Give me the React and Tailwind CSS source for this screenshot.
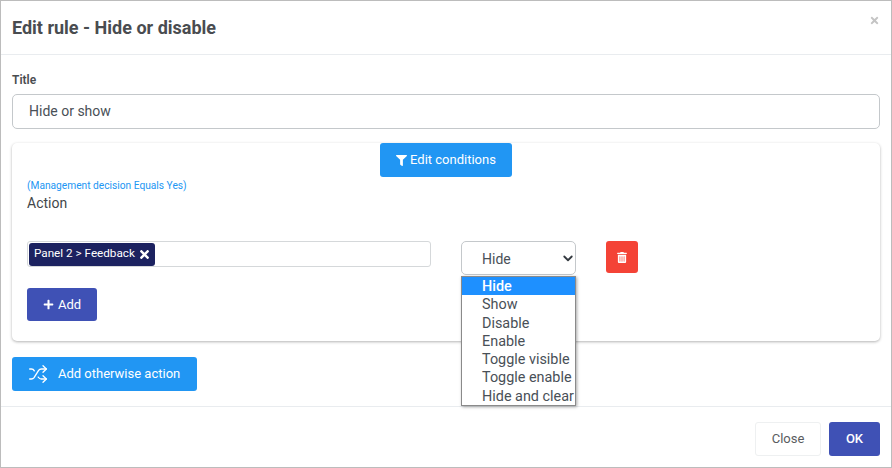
import { FaFilter, FaPlus, FaTimes, FaTrashAlt } from 'react-icons/fa'
import { LuShuffle } from 'react-icons/lu'

const OPTIONS = ['Hide', 'Show', 'Disable', 'Enable', 'Toggle visible', 'Toggle enable', 'Hide and clear']

function ActionRow() {
  return (
    <div className="mt-[29px] flex items-start">
      <div className="flex h-[26px] w-[404px] items-center rounded-[3px] border border-[#d5d8da] pl-[1px]">
        <span className="flex h-[23px] items-center gap-[3px] rounded-[3px] bg-[#1c2260] pl-[5px] pr-[4px] text-[11.7px] text-white">
          Panel 2 &gt; Feedback
          <FaTimes className="h-[13px] w-[13px]" />
        </span>
      </div>

      <div className="relative ml-[30px] w-[115px]">
        <div className="flex h-[34px] items-center justify-between rounded-[5px] border border-[#c4c8cb] pl-[20px] pr-[1px] text-[14px] text-[#495057]">
          <span className="mt-[2px]">Hide</span>
          <svg viewBox="0 0 16 16" className="h-[12px] w-[12px] text-[#343a40]" fill="none" stroke="currentColor" strokeWidth="2.4" strokeLinecap="round" strokeLinejoin="round">
            <path d="M3 6l5 5 5-5" />
          </svg>
        </div>
        <ul className="absolute left-0 top-[35px] z-10 h-[130px] w-[115px] border border-[#8a8a8a] bg-white text-[14.4px] leading-[18.3px] text-[#495057] shadow-[1px_1px_3px_rgba(0,0,0,0.35)]">
          {OPTIONS.map((o, i) => (
            <li key={o} className={i === 0 ? 'h-[18.3px] bg-[#1e90ff] pl-[20px] pt-[1px] font-medium text-white' : 'h-[18.3px] whitespace-nowrap pl-[20px] pt-[1px]'}>
              {o}
            </li>
          ))}
        </ul>
      </div>

      <button className="ml-[30px] flex h-[32px] w-[32px] items-center justify-center rounded-[3px] bg-[#f44336] text-white">
        <FaTrashAlt className="h-[11px] w-[10px]" />
      </button>
    </div>
  )
}

export default function App() {
  return (
    <div className="flex h-[468px] w-[892px] flex-col border border-[#bcbcbc] bg-white font-['Roboto',sans-serif] text-[#424549]">
      <header className="flex h-[54px] shrink-0 items-center justify-between border-b border-[#e9ecef] pl-[11px] pr-[11px]">
        <h1 className="text-[18px] font-bold text-[#494c50]">Edit rule - Hide or disable</h1>
        <FaTimes className="mb-[14px] h-[11px] w-[11px] text-[#c4c4c4]" />
      </header>

      <main className="h-[351px] shrink-0 px-[11px] pt-[17px]">
        <label className="block text-[12px] font-semibold leading-[16px] text-[#494c50]">Title</label>
        <div className="mt-[6px] flex h-[35px] items-center rounded-[5px] border border-[#c4c8cb] pl-[16px] text-[14px] text-[#495057]">
          Hide or show
        </div>

        <section className="mt-[14px] h-[198px] rounded-[5px] bg-white px-[15px] shadow-[0_1px_3px_rgba(0,0,0,0.3)]">
          <div className="flex justify-center">
            <button className="flex h-[34px] w-[132px] items-center justify-center gap-[3px] rounded-[3px] bg-[#2196f3] text-[13px] text-white">
              <FaFilter className="h-[11px] w-[11px]" />
              Edit conditions
            </button>
          </div>
          <p className="mt-[2px] text-[10.2px] leading-[14px] text-[#2196f3]">(Management decision Equals Yes)</p>
          <p className="mt-[1px] text-[14px] leading-[18px] text-[#43464a]">Action</p>

          <ActionRow />

          <button className="mt-[13px] flex h-[33px] w-[70px] items-center justify-center gap-[4px] rounded-[3px] bg-[#3f51b5] text-[13px] text-white">
            <FaPlus className="h-[11px] w-[11px]" />
            Add
          </button>
        </section>

        <button className="mt-[16px] flex h-[34px] w-[185px] items-center rounded-[3px] bg-[#2196f3] pl-[16px] text-[13px] text-white">
          <LuShuffle className="mr-[10px] h-[20px] w-[20px]" strokeWidth={1.6} />
          Add otherwise action
        </button>
      </main>

      <footer className="flex flex-1 items-start justify-end gap-[8px] border-t border-[#e9ecef] pr-[11px] pt-[15px]">
        <button className="h-[34px] w-[66px] rounded-[3px] border border-[#eef0f1] bg-white text-[13px] text-[#595c60]">Close</button>
        <button className="h-[34px] w-[51px] rounded-[3px] bg-[#3f51b5] text-[13px] font-medium text-white">OK</button>
      </footer>
    </div>
  )
}
